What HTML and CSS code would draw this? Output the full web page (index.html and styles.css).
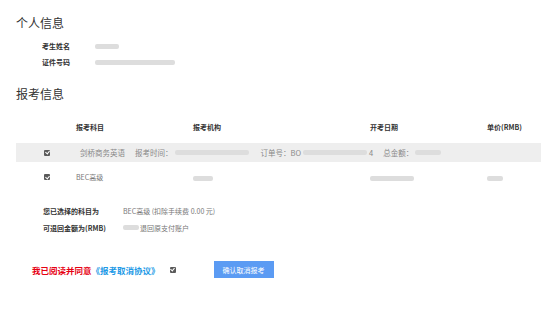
FILE: index.html
```html
<!DOCTYPE html>
<html lang="zh-CN">
<head>
    <meta charset="UTF-8">
    <title>取消报考</title>
    <link rel="stylesheet" href="styles.css">
</head>
<body>
<div class="page">
    <h3 class="title">个人信息</h3>
    <ul class="info">
        <li><span class="label">考生姓名</span><span class="blur w24"></span></li>
        <li><span class="label">证件号码</span><span class="blur w80"></span></li>
    </ul>

    <h3 class="title title2">报考信息</h3>
    <div class="table">
        <div class="thead">
            <span class="c1"></span>
            <span class="c2">报考科目</span>
            <span class="c3">报考机构</span>
            <span class="c4">开考日期</span>
            <span class="c5">单价(RMB)</span>
        </div>
        <div class="order">
            <span class="c1"><i class="chk"></i></span>
            <span class="item">剑桥商务英语</span>
            <span class="item">报考时间：<span class="blur w74"></span></span>
            <span class="item">订单号：BO<span class="blur w64"></span>4</span>
            <span class="item">总金额：<span class="blur w26"></span></span>
        </div>
        <div class="row">
            <span class="c1"><i class="chk"></i></span>
            <span class="c2">BEC高级</span>
            <span class="c3"><span class="blur w20"></span></span>
            <span class="c4"><span class="blur w44"></span></span>
            <span class="c5"><span class="blur w16"></span></span>
        </div>
    </div>

    <ul class="summary">
        <li><span class="label">您已选择的科目为</span><span class="val">BEC高级 (扣除手续费 0.00 元)</span></li>
        <li><span class="label">可退回金额为(RMB)</span><span class="val"><span class="blur w16"></span>退回原支付账户</span></li>
    </ul>

    <div class="agree">
        <span class="agree-text">我已阅读并同意<a class="link">《报考取消协议》</a></span>
        <i class="chk"></i>
        <button class="btn">确认取消报考</button>
    </div>
</div>
</body>
</html>
```

FILE: styles.css
```css
* {
    padding: 0;
    margin: 0;
}

li {
    list-style: none;
}

body {
    font-family: "Noto Sans CJK SC", "Noto Sans", sans-serif;
    color: #333;
    background: #fff;
}

.page {
    padding: 16px 13px 0 16px;
}

.title {
    font-size: 12px;
    font-weight: normal;
    line-height: 14px;
    color: #333;
}

.title2 {
    margin-top: 17px;
}

.info {
    padding: 8px 0 0 26px;
}

.info li {
    display: flex;
    align-items: center;
    height: 16px;
    font-size: 7px;
}

.label {
    font-weight: bold;
    color: #333;
}

.info .label {
    width: 53px;
}

.blur {
    display: inline-block;
    height: 5px;
    background: #ddd;
    border-radius: 2px;
    filter: blur(0.6px);
    vertical-align: middle;
}

.w16 { width: 16px; }
.w20 { width: 20px; }
.w24 { width: 24px; }
.w26 { width: 26px; }
.w44 { width: 44px; }
.w64 { width: 64px; }
.w74 { width: 74px; }
.w80 { width: 80px; }

.table {
    margin-top: 18px;
    width: 525px;
    font-size: 7px;
}

.thead, .row {
    display: grid;
    grid-template-columns: 60px 117px 177px 117px 54px;
    align-items: center;
}

.thead {
    height: 16px;
    font-weight: bold;
    color: #333;
}

.c1 {
    padding-left: 28px;
    display: flex;
}

.order {
    margin-top: 8px;
    height: 19px;
    background: #eee;
    display: flex;
    align-items: center;
    color: #888;
    font-size: 7.5px;
}

.order .c1 {
    width: 36px;
}

.order .item {
    margin-right: 10px;
    display: flex;
    align-items: center;
}

.order .item .blur {
    margin: 0 2px;
}

.row {
    height: 30px;
    color: #777;
}

.chk {
    display: inline-block;
    width: 6px;
    height: 6px;
    background: #5a5a5a;
    border-radius: 1px;
    position: relative;
}

.chk:after {
    content: "";
    position: absolute;
    left: 1.5px;
    top: 0.5px;
    width: 2px;
    height: 3px;
    border: solid #fff;
    border-width: 0 1px 1px 0;
    transform: rotate(40deg);
}

.summary {
    margin-top: 10px;
    padding-left: 27px;
    font-size: 7px;
}

.summary li {
    display: flex;
    align-items: center;
    height: 17px;
}

.summary .label {
    width: 80px;
}

.summary .val {
    color: #777;
    display: flex;
    align-items: center;
}

.summary .val .blur {
    margin-right: 1px;
}

.agree {
    margin-top: 25px;
    padding-left: 16px;
    display: flex;
    align-items: center;
    height: 17px;
}

.agree-text {
    font-size: 8.5px;
    font-weight: bold;
    color: #e60012;
}

.link {
    color: #1e9ae6;
}

.agree .chk {
    margin-left: 10px;
}

.btn {
    margin-left: 38px;
    width: 60px;
    height: 17px;
    border: none;
    background: #5b9bf3;
    color: #fff;
    font-family: "Noto Sans CJK SC", sans-serif;
    font-size: 7px;
}
```
